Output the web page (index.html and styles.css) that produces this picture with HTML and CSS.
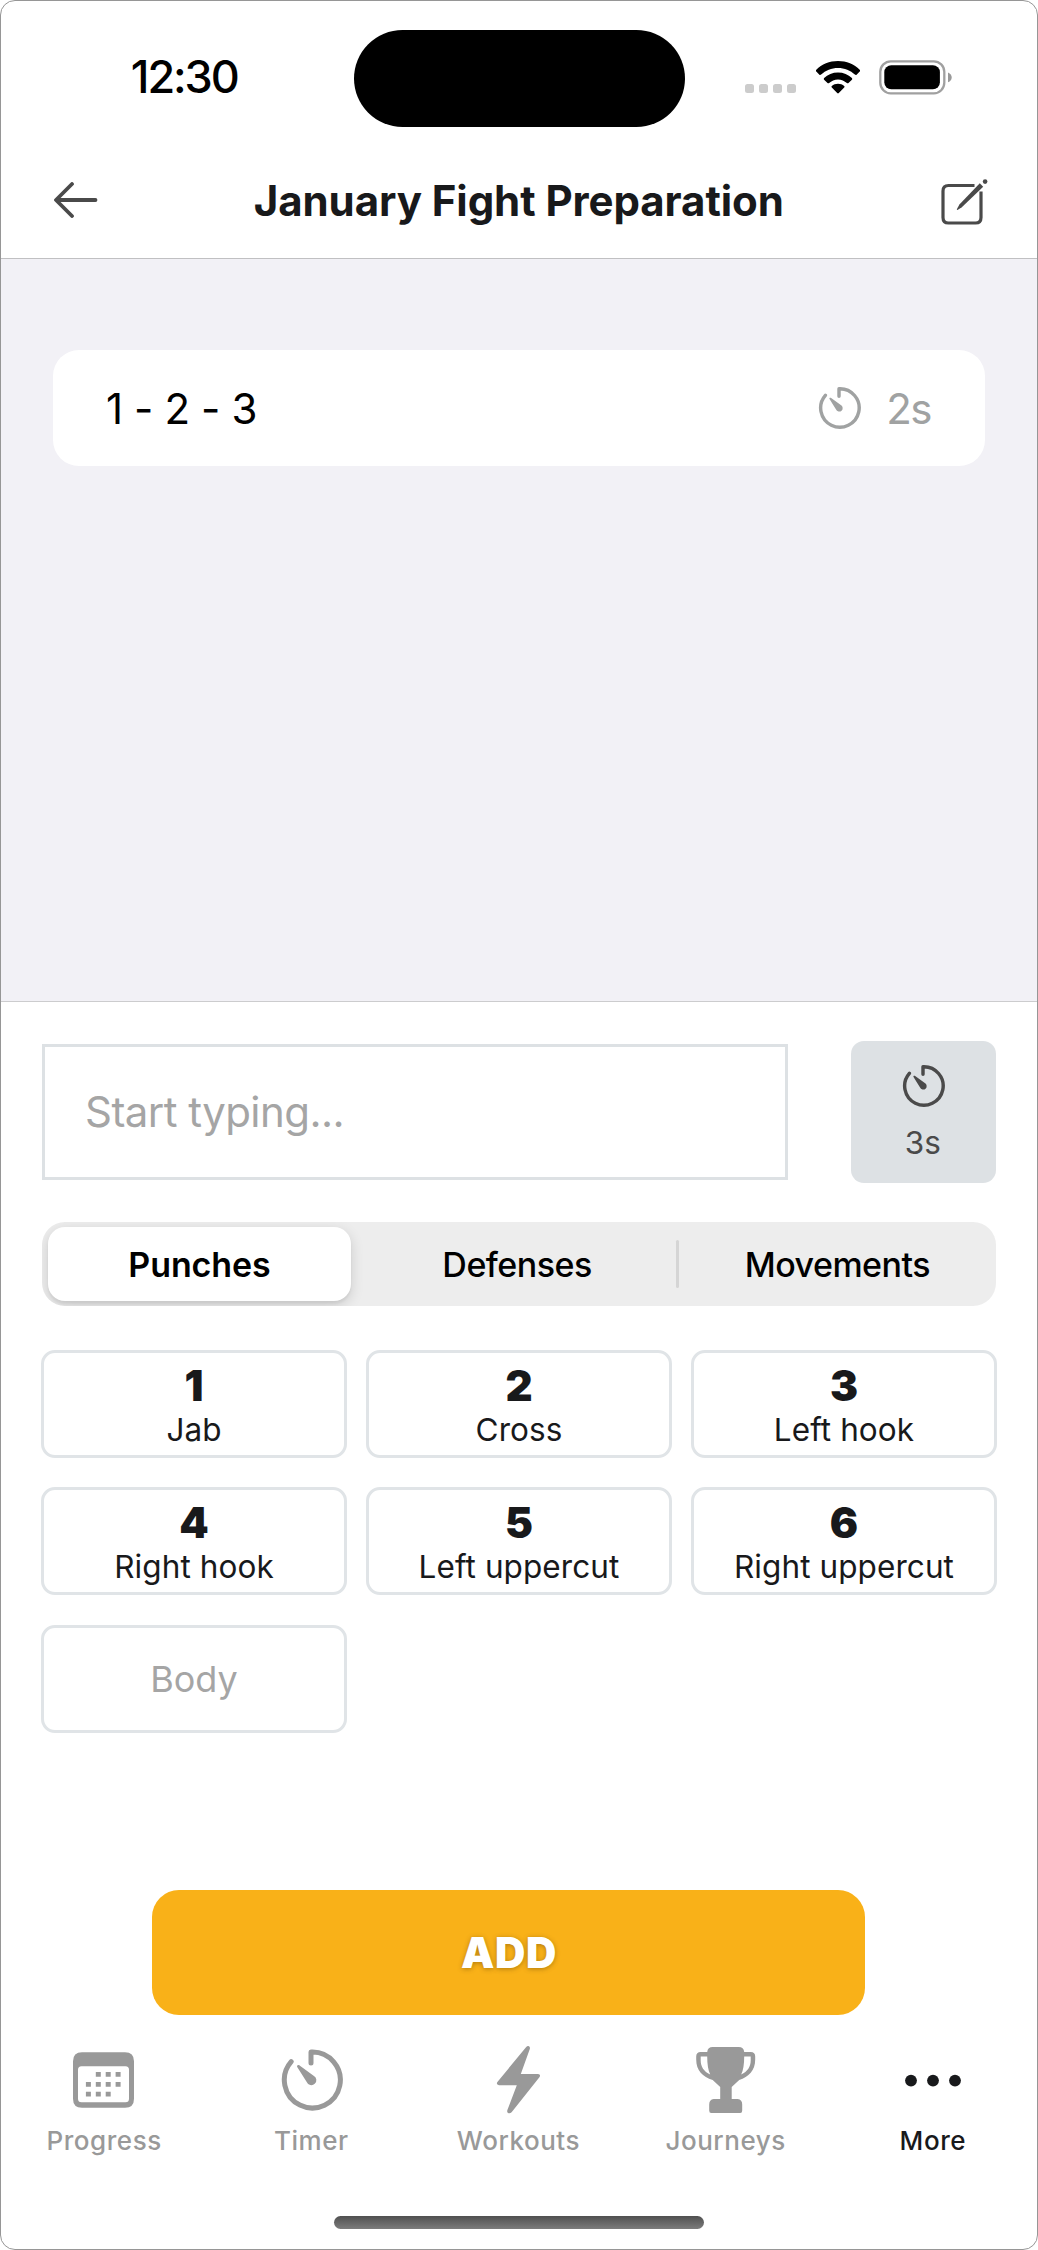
FILE: index.html
```html
<!DOCTYPE html>
<html lang="en">
<head>
<meta charset="utf-8">
<title>January Fight Preparation</title>
<link rel="stylesheet" href="styles.css">
</head>
<body>
<svg class="defs" aria-hidden="true">
  <symbol id="timer" viewBox="-32 -32 64 64">
    <path d="M-19.8 -18.4A28 28 0 1 0 0 -28V-17" fill="none" stroke="currentColor" stroke-width="5" stroke-linecap="round" stroke-linejoin="round"/>
    <path d="M-13.8 -13.1C-14.6 -14.8 -12.6 -15.6 -11.4 -14.6L2.6 -4.3A5 5 0 1 1 -4.3 2Z" fill="currentColor"/>
  </symbol>
</svg>
<div class="phone">
  <header class="header">
    <div class="status">
      <div class="clock"><span class="clock-text">12:30</span></div>
      <div class="island"></div>
      <div class="indicators">
        <div class="signal"><i></i><i></i><i></i><i></i></div>
        <svg class="wifi" viewBox="0 0 44 33"><path d="M22 0C30.500 0 38.300 3.300 43.700 8.800Q44.600 9.700 43.700 10.600L40.600 13.700Q39.800 14.400 38.900 13.600C34.500 9.300 28.500 6.900 22 6.900S9.500 9.300 5.100 13.600Q4.200 14.400 3.400 13.700L.3 10.600Q-.6 9.700 .3 8.800C5.700 3.300 13.500 0 22 0Z"/><path d="M22 11.400C27.400 11.400 32.300 13.400 35.900 16.900Q36.700 17.800 35.900 18.700L32.500 22Q31.700 22.700 30.900 22C28.500 19.900 25.400 18.400 22 18.400S15.500 19.900 13.100 22Q12.300 22.700 11.500 22L8.100 18.700Q7.300 17.800 8.100 16.900C11.700 13.400 16.600 11.400 22 11.400Z"/><path d="M22 22.800C24.500 22.800 26.500 23.700 28.200 25Q29 25.800 28.200 26.600L22.800 32.100Q22 32.900 21.200 32.100L15.800 26.600Q15 25.800 15.800 25C17.500 23.700 19.500 22.800 22 22.800Z"/></svg>
        <svg class="battery" viewBox="0 0 74 35"><rect x="1.300" y="1.300" width="64" height="32" rx="10.500" fill="none" stroke="#a0a0a0" stroke-width="2.300"/><rect x="5.300" y="5.300" width="55.600" height="24" rx="7"/><path d="M69 12.500C71.500 13.500 72.700 15.300 72.700 17.400S71.500 21.300 69 22.300Z" fill="#999"/></svg>
      </div>
    </div>
    <div class="nav">
      <svg class="back" viewBox="0 0 44 36"><path d="M41.500 18H2.500M18 2L2 18L18 34" /></svg>
      <h1 class="title">January Fight Preparation</h1>
      <svg class="edit" viewBox="0 0 48 48"><path d="M34.500 7.500H8.500Q3 7.500 3 13V39.500Q3 45 8.500 45H35.500Q41 45 41 39.500V13.500" fill="none" stroke="#4a4a4a" stroke-width="3.200"/><path d="M39.800 5.300L43.200 8.700L21.800 29.200L17.500 31.900Q16.500 32 17 30.900L19.400 26.600Z"/><circle cx="45.100" cy="3.600" r="2.300"/></svg>
    </div>
  </header>

  <main class="combos">
    <div class="combo">
      <span class="combo-name">1 - 2 - 3</span>
      <svg class="timer-sm"><use href="#timer"/></svg>
      <span class="combo-time">2s</span>
    </div>
  </main>

  <section class="composer">
    <div class="entry">
      <div class="field"><span class="placeholder">Start typing...</span></div>
      <button class="duration"><svg class="timer-sm"><use href="#timer"/></svg><span class="duration-text">3s</span></button>
    </div>
    <div class="segments">
      <div class="segment selected"><span>Punches</span></div>
      <div class="segment"><span>Defenses</span></div>
      <div class="divider"></div>
      <div class="segment"><span>Movements</span></div>
    </div>
    <div class="moves">
      <button class="move"><b>1</b><span>Jab</span></button>
      <button class="move"><b>2</b><span>Cross</span></button>
      <button class="move"><b>3</b><span>Left hook</span></button>
      <button class="move"><b>4</b><span>Right hook</span></button>
      <button class="move"><b>5</b><span>Left uppercut</span></button>
      <button class="move"><b>6</b><span>Right uppercut</span></button>
      <button class="move body">Body</button>
    </div>
    <button class="add"><span>ADD</span></button>
  </section>

  <nav class="tabs">
    <div class="tab"><svg class="tab-icon" viewBox="0.500 -0.700 70 70"><path fill-rule="evenodd" d="M13.500 6.500H56.500Q65.500 6.500 65.500 15.500V53Q65.500 62 56.500 62H13.500Q4.500 62 4.500 53V15.500Q4.500 6.500 13.500 6.500ZM13 20.500Q9.500 20.500 9.500 24V53Q9.500 56.500 13 56.500H57Q60.500 56.500 60.500 53V24Q60.500 20.500 57 20.500Z"/><path d="M27.300 28.700h5M37.200 28.700h5M47.100 28.700h5M17.400 38.600h5M27.300 38.600h5M37.200 38.600h5M47.100 38.600h5M17.400 48.500h5M27.300 48.500h5M37.200 48.500h5" stroke="currentColor" stroke-width="4.800"/></svg><span>Progress</span></div>
    <div class="tab"><svg class="tab-icon" viewBox="-35 -35 70 70"><use href="#timer" x="-32" y="-32" width="64" height="64"/></svg><span>Timer</span></div>
    <div class="tab"><svg class="tab-icon" viewBox="0 0 70 70"><path d="M43 2.200Q44.500 .5 46 1.200Q47.300 2 46.800 4L37.800 29H55Q58 29.300 56.600 32L28.600 67.200Q26.800 69 25 68Q23.700 67 24.400 65L33.800 40.300H16Q12.800 39.800 14.400 37Z"/></svg><span>Workouts</span></div>
    <div class="tab"><svg class="tab-icon" viewBox="0.300 -0.500 70 70"><path fill-rule="evenodd" d="M22 1.500H48Q53 1.500 53.500 6.500H60Q64.500 6.500 64.500 11V14C64.500 25 58 31.500 48.500 34.500L41 41.500V53.500H47Q51.500 54 51.500 59V65Q51.500 67.500 49.500 67.500H20.500Q18.500 67.500 18.500 65V59Q18.500 54 23 53.500H29.500V41.500L22 34.500C12 31.500 5.500 25 5.500 14V11Q5.500 6.500 10 6.500H16.500Q17 1.500 22 1.500ZM16.500 11H10V15C10 21 13 26 19.500 29Q16.500 23 16.500 11ZM53.500 11Q53.500 23 50.500 29C57 26 60 21 60 15V11Z"/></svg><span>Journeys</span></div>
    <div class="tab active"><svg class="tab-icon" viewBox="0 0 70 70"><circle cx="13" cy="35.600" r="5.900"/><circle cx="35" cy="35.600" r="5.900"/><circle cx="57" cy="35.600" r="5.900"/></svg><span>More</span></div>
  </nav>
  <div class="home"></div>
</div>
</body>
</html>
```

FILE: styles.css
```css
* { box-sizing: border-box; }
html, body { margin: 0; background: #fff; }
body { font-family: Inter, "Liberation Sans", sans-serif; color: #18191b; }
button { font: inherit; color: inherit; padding: 0; margin: 0; background: none; border: 0; }
span, b, h1 { white-space: nowrap; }
.defs { display: none; }

.phone {
  width: 1038px; height: 2250px; border: 1px solid #969696; border-radius: 15px;
  background: #fff; overflow: hidden; display: flex; flex-direction: column;
}

.header { height: 258px; border-bottom: 1px solid #c0c0c2; }
.status { height: 126px; padding-top: 28.500px; display: grid; grid-template-columns: 352.500px 331px 1fr; }
.clock { height: 97px; padding: 0 20px 0 0; display: flex; justify-content: center; }
.clock-text { font-size: 45px; font-weight: 550; line-height: 94px; color: #000; letter-spacing: -2.100px; margin-left: 34px; }
.island { height: 97px; border-radius: 48.500px; background: #000; }
.indicators { height: 68px; padding: 30px 0 0 60px; display: flex; align-items: flex-start; }
.signal { display: flex; gap: 5.100px; padding-top: 24.500px; }
.signal i { width: 9px; height: 9px; border-radius: 2.500px; background: #ccc; }
.wifi { width: 44px; height: 33px; margin: 1px 0 0 20.500px; }
.battery { width: 74px; height: 35px; margin-left: 19px; }

.nav { height: 131px; padding: 20px 49.500px 0 53px; display: flex; align-items: flex-start; }
.back { width: 44px; height: 36px; margin-top: 34.500px; fill: none; stroke: #4a4a4a; stroke-width: 3.800; stroke-linecap: round; stroke-linejoin: round; }
.title { flex: 1; margin: 0; text-align: center; font-size: 42px; font-weight: 700; line-height: 108px; letter-spacing: -0.070px; }
.edit { width: 48px; height: 48px; margin-top: 30.500px; fill: #4a4a4a; }

.combos { height: 743px; padding: 91px 52px 0; background: #f2f1f6; border-bottom: 1px solid #ccccce; }
.combo { height: 116px; padding: 0 54px 0 53px; border-radius: 26px; background: #fff; display: flex; align-items: center; font-size: 42px; color: #a0a2a2; }
.combo-name { flex: 1; color: #000; letter-spacing: -0.400px; }
.timer-sm { width: 44px; height: 44px; }
.combo-time { margin-left: 25.500px; letter-spacing: -1.500px; }

.composer { height: 1014px; padding: 39px 41px 0; }
.entry { display: flex; justify-content: space-between; align-items: center; }
.field { width: 746px; height: 136px; border: 3px solid #dde1e4; padding: 0 0 2px 40px; display: flex; align-items: center; }
.placeholder { font-size: 42px; color: #a5a5a5; letter-spacing: -0.560px; }
.duration { width: 145px; height: 142px; border-radius: 13px; background: #dde1e4; color: #4a4a4a; display: flex; flex-direction: column; align-items: center; padding: 23px 1.500px 0 0; }
.duration-text { font-size: 31.500px; line-height: 38px; margin-top: 15.500px; }

.segments { height: 84px; margin-top: 39px; padding: 5px 0 5px 6px; border-radius: 23px; background: #ededed; display: flex; align-items: center; overflow: hidden; }
.segment { flex: 1; height: 74px; display: flex; align-items: center; justify-content: center; font-size: 34px; font-weight: 450; letter-spacing: -0.500px; color: #000; }
.segment.selected { flex: 0 0 303px; margin-right: 7.500px; border-radius: 17px; background: #fff; font-weight: 570; letter-spacing: -0.100px; box-shadow: 0 4px 14px rgba(0,0,0,.14), 0 3px 3px rgba(0,0,0,.05); }
.divider { width: 3px; height: 48px; border-radius: 1.500px; background: #d5d5d5; }

.moves { margin: 44px -1px 0; display: grid; grid-template-columns: repeat(3, 306px); justify-content: space-between; row-gap: 29.300px; }
.move { height: 108px; border: 3px solid #e0e4e7; border-radius: 14px; display: flex; flex-direction: column; align-items: center; }
.move b { font-size: 42px; font-weight: 900; line-height: 50px; margin-top: 7.500px; }
.move span { font-size: 31.500px; line-height: 38px; letter-spacing: 0.080px; margin-top: 0.500px; }
.move.body { justify-content: center; font-size: 36px; color: #a5a5a5; }

.add { display: flex; align-items: center; justify-content: center; width: 713px; height: 125px; margin: 157px 0 0 110px; border-radius: 27px; background: #f9b118; }
.add span { font-size: 42px; font-weight: 900; letter-spacing: 0.700px; margin-left: 1px; color: #fff; text-shadow: 0 1px 5px rgba(90,60,0,.45); }

.tabs { height: 160px; margin-left: -0.500px; display: grid; grid-template-columns: repeat(5, 207.200px); }
.tab { padding-top: 29px; display: flex; flex-direction: column; align-items: center; color: #999; }
.tab.active { color: #18191b; }
.tab-icon { width: 70px; height: 70px; fill: currentColor; }
.tab span { font-size: 26px; font-weight: 500; line-height: 32px; letter-spacing: 0.550px; margin-top: 10px; }

.home { width: 370.500px; height: 13px; margin: 40px auto 0; border-radius: 6.500px; background: linear-gradient(#505050, #7c7c7c); }
```
